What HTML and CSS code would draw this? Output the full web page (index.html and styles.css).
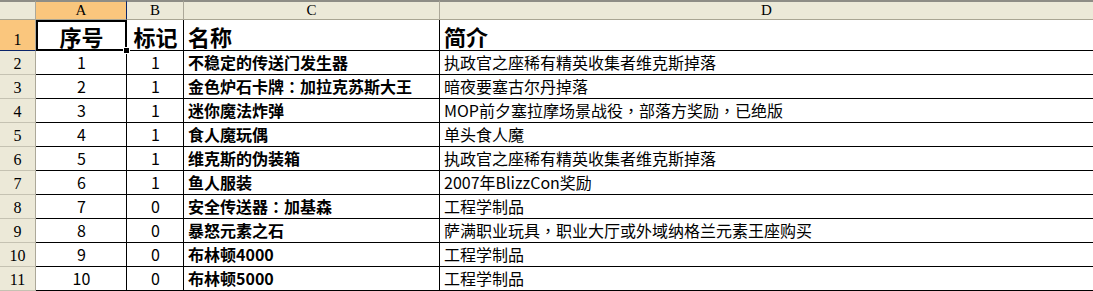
FILE: index.html
```html
<!DOCTYPE html>
<html lang="zh">
<head>
<meta charset="utf-8">
<title>Sheet</title>
<link rel="stylesheet" href="styles.css">
</head>
<body>
<div class="sheet">
  <div class="corner"></div>
  <div class="colhead sel-col">A</div>
  <div class="colhead">B</div>
  <div class="colhead">C</div>
  <div class="colhead last">D</div>

  <div class="rowhead sel-row">1</div>
  <div class="cell title center active">序号</div>
  <div class="cell title center">标记</div>
  <div class="cell title">名称</div>
  <div class="cell title last">简介</div>

  <div class="rowhead">2</div>
  <div class="cell center">1</div><div class="cell center">1</div>
  <div class="cell name">不稳定的传送门发生器</div><div class="cell last">执政官之座稀有精英收集者维克斯掉落</div>

  <div class="rowhead">3</div>
  <div class="cell center">2</div><div class="cell center">1</div>
  <div class="cell name">金色炉石卡牌<span class="punct">：</span>加拉克苏斯大王</div><div class="cell last">暗夜要塞古尔丹掉落</div>

  <div class="rowhead">4</div>
  <div class="cell center">3</div><div class="cell center">1</div>
  <div class="cell name">迷你魔法炸弹</div><div class="cell last">MOP前夕塞拉摩场景战役<span class="punct">，</span>部落方奖励<span class="punct">，</span>已绝版</div>

  <div class="rowhead">5</div>
  <div class="cell center">4</div><div class="cell center">1</div>
  <div class="cell name">食人魔玩偶</div><div class="cell last">单头食人魔</div>

  <div class="rowhead">6</div>
  <div class="cell center">5</div><div class="cell center">1</div>
  <div class="cell name">维克斯的伪装箱</div><div class="cell last">执政官之座稀有精英收集者维克斯掉落</div>

  <div class="rowhead">7</div>
  <div class="cell center">6</div><div class="cell center">1</div>
  <div class="cell name">鱼人服装</div><div class="cell last">2007年BlizzCon奖励</div>

  <div class="rowhead">8</div>
  <div class="cell center">7</div><div class="cell center">0</div>
  <div class="cell name">安全传送器<span class="punct">：</span>加基森</div><div class="cell last">工程学制品</div>

  <div class="rowhead">9</div>
  <div class="cell center">8</div><div class="cell center">0</div>
  <div class="cell name">暴怒元素之石</div><div class="cell last">萨满职业玩具<span class="punct">，</span>职业大厅或外域纳格兰元素王座购买</div>

  <div class="rowhead">10</div>
  <div class="cell center">9</div><div class="cell center">0</div>
  <div class="cell name">布林顿4000</div><div class="cell last">工程学制品</div>

  <div class="rowhead">11</div>
  <div class="cell center">10</div><div class="cell center">0</div>
  <div class="cell name">布林顿5000</div><div class="cell last">工程学制品</div>
</div>
</body>
</html>
```

FILE: styles.css
```css
html, body {
  margin: 0;
  padding: 0;
  background: #ffffff;
}

.sheet {
  display: grid;
  grid-template-columns: 36px 91px 57px 256px 1fr;
  grid-template-rows: 20px 31px repeat(10, 24px);
  width: 1093px;
  font-family: "Noto Sans CJK SC", "Liberation Sans", sans-serif;
  color: #000;
}

.corner, .colhead {
  box-sizing: border-box;
  background: #ece9d8;
  border-top: 2px solid #8e8d86;
  border-bottom: 1px solid #a9a593;
  border-right: 1px solid #aca899;
}

.colhead {
  display: flex;
  align-items: center;
  justify-content: center;
  font-family: "Liberation Serif", serif;
  font-size: 15px;
  line-height: 16px;
  padding-bottom: 1px;
}

.colhead.last { border-right: none; }

.sel-col {
  background: #fac67d;
  border-right: 1px solid #0a246a;
}

.rowhead {
  box-sizing: border-box;
  background: #ece9d8;
  border-right: 1px solid #aca899;
  border-bottom: 1px solid #c5c2b2;
  display: flex;
  align-items: flex-end;
  justify-content: center;
  font-family: "Liberation Serif", serif;
  font-size: 16px;
  line-height: 18px;
  padding-bottom: 1px;
}

.sel-row {
  background: #fac67d;
  border-bottom: 1px solid #0a246a;
}

.cell {
  box-sizing: border-box;
  border-right: 1px solid #000;
  border-bottom: 1px solid #000;
  display: flex;
  align-items: flex-end;
  padding: 0 3px 1px 4px;
  font-size: 16px;
  line-height: 21px;
  white-space: nowrap;
  overflow: hidden;
}

.cell.last { border-right: none; }

.cell.center { justify-content: center; }

.cell.name { font-weight: 700; }

.punct {
  font-family: "Noto Sans CJK TC", "Noto Sans CJK SC", sans-serif;
}

.cell.title {
  font-size: 22px;
  font-weight: 700;
  line-height: 28px;
  padding-bottom: 0;
}

.active {
  position: relative;
  overflow: visible;
}

.active::after {
  content: "";
  position: absolute;
  left: 0;
  top: 0;
  right: -1px;
  bottom: -1px;
  border: 2px solid #000;
  pointer-events: none;
}

.active::before {
  content: "";
  position: absolute;
  right: -4px;
  bottom: -4px;
  width: 5px;
  height: 5px;
  background: #000;
  border: 1px solid #fff;
  z-index: 2;
}
```
